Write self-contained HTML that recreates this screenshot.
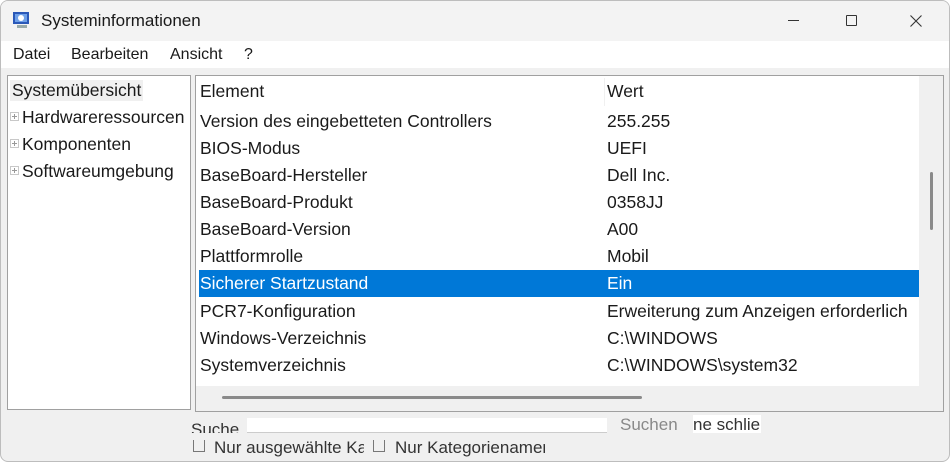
<!DOCTYPE html>
<html><head><meta charset="utf-8"><style>
*{margin:0;padding:0;box-sizing:border-box}
body{width:950px;height:462px;background:#fff;font-family:"Liberation Sans",sans-serif;color:#1a1a1a;position:relative;overflow:hidden}
.win{position:absolute;left:0;top:0;width:950px;height:462px;border:1px solid #bdbdbd;border-radius:8px;background:#f0f0f0;overflow:hidden}
.title{position:absolute;left:0;top:0;width:100%;height:40px;background:#f3f3f3}
.title .t{position:absolute;left:40px;top:10px;font-size:17px}
.menu{position:absolute;left:0;top:40px;width:100%;height:27px;background:#fff;font-size:16px}
.menu span{position:absolute;top:5px}
.tree{position:absolute;left:6px;top:74px;width:184px;height:335px;background:#fff;border:1px solid #a0a0a0;font-size:17.5px}
.tree div{position:absolute;left:14px;white-space:nowrap}
.tree .plus{position:absolute;left:2px;width:9px;height:9px;border:1px solid #c8c8c8}
.tree .plus:before{content:"";position:absolute;left:1px;top:3px;width:5px;height:1px;background:#999}
.tree .plus:after{content:"";position:absolute;left:3px;top:1px;width:1px;height:5px;background:#999}
.list{position:absolute;left:194px;top:74px;width:749px;height:337px;background:#fff;border:1px solid #a0a0a0;overflow:hidden}
.row{position:absolute;left:3px;width:720px;height:27px;font-size:17.5px;line-height:27px}
.row span{position:absolute;left:1px;white-space:nowrap}
.row span.v{left:408px}
.sel{background:#0078d7;color:#fff}
.vs{position:absolute;left:723px;top:0;width:25px;height:310px;background:#f0f0f0}
.hs{position:absolute;left:0;top:310px;width:748px;height:27px;background:#f0f0f0}
</style></head><body>
<div class="win">
<div class="title">
<svg style="position:absolute;left:11px;top:9px" width="20" height="20" viewBox="0 0 20 20"><rect x="1" y="2" width="16" height="12" fill="#2a58b8"/><rect x="3" y="4" width="12" height="8" fill="#6fa0e8"/><circle cx="9" cy="8" r="3" fill="#fff"/><rect x="5" y="15" width="10" height="3" fill="#9aa"/></svg>
<div class="t">Systeminformationen</div>
<div style="position:absolute;left:787px;top:19px;width:11px;height:1px;background:#333"></div>
<div style="position:absolute;left:845px;top:14px;width:11px;height:11px;border:1px solid #333;border-radius:1px"></div>
<svg style="position:absolute;left:909px;top:14px" width="12" height="12"><path d="M0.5 0.5L11.5 11.5M11.5 0.5L0.5 11.5" stroke="#333" stroke-width="1.1"/></svg>
</div>
<div class="menu"><span style="left:12px">Datei</span><span style="left:70px">Bearbeiten</span><span style="left:169px">Ansicht</span><span style="left:243px">?</span></div>
<div class="tree">
<div style="left:2px;top:4px;background:#f0f0f0;padding:0 2px">Systemübersicht</div>
<span class="plus" style="top:36px"></span><div style="top:31px">Hardwareressourcen</div>
<span class="plus" style="top:63px"></span><div style="top:58px">Komponenten</div>
<span class="plus" style="top:90px"></span><div style="top:85px">Softwareumgebung</div>
</div>
<div class="list">
<div class="row" style="top:2px"><span>Element</span><span class="v">Wert</span></div>
<div style="position:absolute;left:408px;top:2px;width:1px;height:28px;background:#f0f0f0"></div>
<div class="row" style="top:32px"><span>Version des eingebetteten Controllers</span><span class="v">255.255</span></div>
<div class="row" style="top:59px"><span>BIOS-Modus</span><span class="v">UEFI</span></div>
<div class="row" style="top:86px"><span>BaseBoard-Hersteller</span><span class="v">Dell Inc.</span></div>
<div class="row" style="top:113px"><span>BaseBoard-Produkt</span><span class="v">0358JJ</span></div>
<div class="row" style="top:140px"><span>BaseBoard-Version</span><span class="v">A00</span></div>
<div class="row" style="top:167px"><span>Plattformrolle</span><span class="v">Mobil</span></div>
<div class="row sel" style="top:194px"><span>Sicherer Startzustand</span><span class="v">Ein</span></div>
<div class="row" style="top:222px"><span>PCR7-Konfiguration</span><span class="v">Erweiterung zum Anzeigen erforderlich</span></div>
<div class="row" style="top:249px"><span>Windows-Verzeichnis</span><span class="v">C:\WINDOWS</span></div>
<div class="row" style="top:276px"><span>Systemverzeichnis</span><span class="v">C:\WINDOWS\system32</span></div>
<div class="vs"><div style="position:absolute;left:11px;top:96px;width:3px;height:58px;background:#8a8a8a;border-radius:2px"></div></div>
<div class="hs"><div style="position:absolute;left:26px;top:10px;width:420px;height:3px;background:#8a8a8a;border-radius:2px"></div></div>
</div>
<div style="position:absolute;left:190px;top:418px;font-size:17px;height:14px;overflow:hidden;line-height:22px;color:#333">Suche</div>
<div style="position:absolute;left:246px;top:417px;width:360px;height:15px;background:#fff;border-bottom:1px solid #ccc"></div>
<div style="position:absolute;left:619px;top:414px;font-size:17px;color:#888;height:18px;overflow:hidden;line-height:20px">Suchen</div>
<div style="position:absolute;left:692px;top:414px;width:68px;height:18px;background:#fff;font-size:17px;line-height:20px;overflow:hidden;color:#333">ne schlie</div>
<div style="position:absolute;left:192px;top:439px;width:12px;height:12px;border:1px solid #777;border-top:none"></div>
<div style="position:absolute;left:213px;top:437px;font-size:17px;width:150px;overflow:hidden;white-space:nowrap;color:#333">Nur ausgewählte Kategorie</div>
<div style="position:absolute;left:372px;top:439px;width:12px;height:12px;border:1px solid #777;border-top:none"></div>
<div style="position:absolute;left:394px;top:437px;font-size:17px;width:150px;overflow:hidden;white-space:nowrap;color:#333">Nur Kategorienamen</div>
</div>
</body></html>
